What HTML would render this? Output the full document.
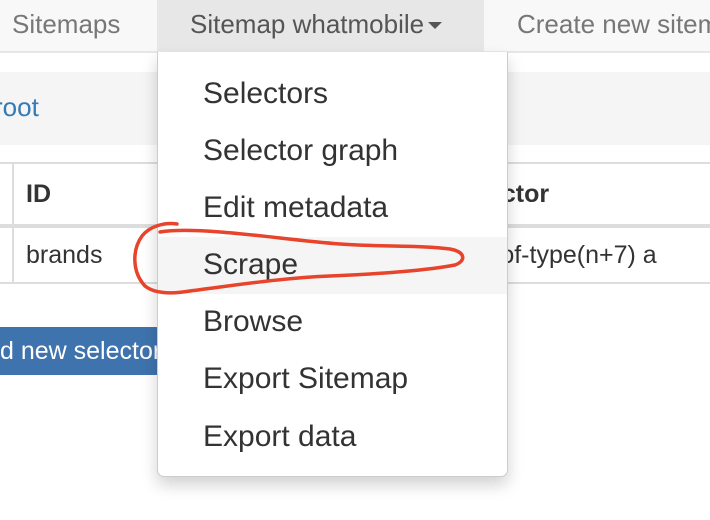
<!DOCTYPE html>
<html><head><style>
*{margin:0;padding:0;box-sizing:border-box}
html,body{width:710px;height:520px;overflow:hidden}
body{background:#fff;font-family:"Liberation Sans",Helvetica,Arial,sans-serif;color:#333;position:relative}
.nav{position:absolute;left:0;top:0;width:710px;height:53px;background:#f8f8f8;border-bottom:2px solid #e7e7e7;overflow:hidden}
.nav span{position:absolute;top:9px;font-size:26px;color:#777;white-space:nowrap}
.act{position:absolute;left:157px;top:0;width:327px;height:51px;background:#e7e7e7}
.bc{position:absolute;left:0;top:72px;width:710px;height:73px;background:#f5f5f5}
.bc span{position:absolute;left:-6px;top:20px;font-size:26px;color:#337ab7}
.tl{position:absolute;left:0;width:710px;background:#ddd}
.vl{position:absolute;left:12px;top:163px;width:2px;height:120px;background:#ddd}
.t{position:absolute;font-size:25px;color:#333;white-space:nowrap}
.btn{position:absolute;left:0;top:327px;width:160px;height:48px;background:#3f73ae;border-radius:0 4px 4px 0;color:#fff;font-size:25px;padding:10px 0 0 0;white-space:nowrap;overflow:hidden}
.dd{position:absolute;left:157px;top:52px;width:351px;height:425px;background:#fff;border:1px solid #ccc;border-top:none;border-radius:0 0 7px 7px;box-shadow:0 8px 16px rgba(0,0,0,.18)}
.it{position:absolute;left:0;width:349px;height:57px;font-size:30px;color:#333;padding:11px 0 0 45px;white-space:nowrap}
.hl{background:#f5f5f5}
</style></head><body>
<div class="nav"><div class="act"></div>
<span style="left:12px">Sitemaps</span>
<span style="left:190px;color:#555">Sitemap whatmobile<span style="position:static;display:inline-block;width:0;height:0;border-left:7px solid transparent;border-right:7px solid transparent;border-top:7px solid #555;margin-left:4px;vertical-align:4px"></span></span>
<span style="left:517px">Create new sitemap</span></div>
<div class="bc"><span>root</span></div>
<div class="tl" style="top:162px;height:2px"></div>
<div class="tl" style="top:224px;height:4px"></div>
<div class="tl" style="top:282px;height:2px"></div>
<div class="vl"></div>
<div class="t" style="left:26px;top:180px;font-weight:bold">ID</div>
<div class="t" style="left:26px;top:241px">brands</div>
<div class="t" style="left:488px;top:180px;font-weight:bold">ector</div>
<div class="t" style="left:492px;top:241px">-of-type(n+7) a</div>
<div class="btn">d new selector</div>
<div class="dd">
<div class="it" style="top:14px">Selectors</div>
<div class="it" style="top:71px">Selector graph</div>
<div class="it" style="top:128px">Edit metadata</div>
<div class="it hl" style="top:185px">Scrape</div>
<div class="it" style="top:242px">Browse</div>
<div class="it" style="top:299px">Export Sitemap</div>
<div class="it" style="top:357px">Export data</div>
</div>
<svg width="710" height="520" style="position:absolute;left:0;top:0">
<path d="M177 224 C165 222 150 226 142 236 C132 250 132 272 145 286 C155 294 172 294 190 291 C230 286 280 278 330 276 C380 274 430 270 455 265 C466 261 466 252 450 249 C420 245 380 247 340 244 C300 241 260 235 220 232 C195 230 172 230 160 232" fill="none" stroke="#e8432b" stroke-width="3.5" stroke-linecap="round"/>
</svg>
</body></html>
